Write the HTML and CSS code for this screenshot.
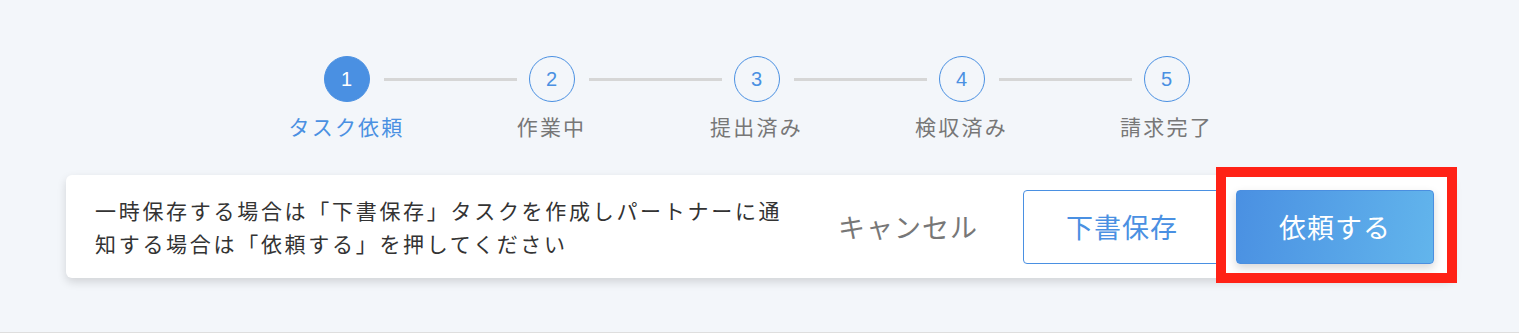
FILE: index.html
```html
<!DOCTYPE html>
<html lang="ja">
<head>
    <meta charset="UTF-8">
    <title>タスク依頼</title>
    <link rel="stylesheet" href="styles.css">
</head>
<body>
    <div class="page">
        <div class="steps">
            <div class="step active">
                <span class="num">1</span>
                <span class="label">タスク依頼</span>
            </div>
            <div class="bar"></div>
            <div class="step">
                <span class="num">2</span>
                <span class="label">作業中</span>
            </div>
            <div class="bar"></div>
            <div class="step">
                <span class="num">3</span>
                <span class="label">提出済み</span>
            </div>
            <div class="bar"></div>
            <div class="step">
                <span class="num">4</span>
                <span class="label">検収済み</span>
            </div>
            <div class="bar"></div>
            <div class="step">
                <span class="num">5</span>
                <span class="label">請求完了</span>
            </div>
        </div>

        <div class="action-box">
            <p class="note">一時保存する場合は「下書保存」タスクを作成しパートナーに通知する場合は「依頼する」を押してください</p>
            <div class="btns">
                <a href="#" class="btn-cancel">キャンセル</a>
                <a href="#" class="btn-draft">下書保存</a>
                <a href="#" class="btn-submit">依頼する</a>
            </div>
        </div>
    </div>
</body>
</html>
```

FILE: styles.css
```css
*{
    padding: 0;
    margin: 0;
    box-sizing: border-box;
}

body{
    background: #f3f6fa;
    font-family: "Noto Sans CJK JP", "Noto Sans", sans-serif;
    color: #333;
}

a{
    text-decoration: none;
}

.page{
    height: 333px;
    border-bottom: 1px solid #dedede;
    padding-top: 56px;
}

/* ステップ */
.steps{
    display: flex;
    justify-content: center;
    align-items: flex-start;
    padding-right: 6px;
}

.step{
    width: 46px;
    display: flex;
    flex-direction: column;
    align-items: center;
}

.step .num{
    display: flex;
    align-items: center;
    justify-content: center;
    width: 46px;
    height: 46px;
    border: 1px solid #4a90e2;
    border-radius: 50%;
    color: #4a90e2;
    font-family: "Liberation Sans", sans-serif;
    font-size: 20px;
}

.step .label{
    margin-top: 11px;
    white-space: nowrap;
    font-size: 21px;
    letter-spacing: 2.2px;
    line-height: 26px;
    color: #777;
}

.step.active .num{
    background: #4a90e2;
    color: #fff;
}

.step.active .label{
    color: #4a90e2;
}

.bar{
    width: 133px;
    height: 3px;
    margin: 22px 12px 0 14px;
    background: #d6d6d6;
}

/* 下部ボックス */
.action-box{
    display: flex;
    align-items: center;
    margin: 36px 66px 0 66px;
    height: 103px;
    padding: 0 19px 0 29px;
    background: #fff;
    border-radius: 6px;
    box-shadow: 0 4px 10px rgba(0,0,0,0.14);
}

.note{
    width: 695px;
    font-size: 21px;
    letter-spacing: 2.7px;
    line-height: 33px;
    color: #333;
}

.btns{
    margin-left: auto;
    display: flex;
    align-items: center;
    gap: 15px;
}

.btns a{
    display: flex;
    align-items: center;
    justify-content: center;
    height: 74px;
    font-size: 27px;
    letter-spacing: 1px;
    border-radius: 4px;
}

.btn-cancel{
    padding: 0 30px;
    color: #777;
}

.btn-draft{
    width: 198px;
    border: 1px solid #4a90e2;
    color: #4a90e2;
    background: #fff;
}

.btn-submit{
    position: relative;
    width: 198px;
    color: #fff;
    border: 1px solid #4b8fe0;
    background: linear-gradient(100deg, #4a90e2, #62b5ec);
    box-shadow: 0 4px 10px rgba(0,0,0,0.16);
}

/* 赤枠（注釈） */
.btn-submit::after{
    content: "";
    position: absolute;
    top: -24px;
    bottom: -20px;
    left: -21px;
    right: -24px;
    border: 10px solid #ff2216;
}
```
